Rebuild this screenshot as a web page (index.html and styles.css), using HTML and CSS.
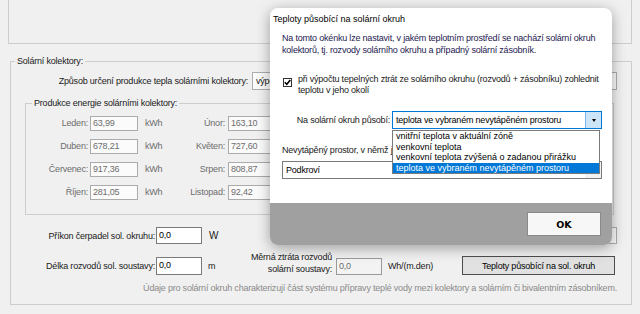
FILE: index.html
```html
<!DOCTYPE html>
<html lang="cs">
<head>
    <meta charset="UTF-8">
    <title>Solární kolektory</title>
    <link rel="stylesheet" href="styles.css">
</head>
<body>
    <div class="top-pane"></div>

    <fieldset class="group">
        <legend>Solární kolektory:</legend>

        <div class="row method">
            <span class="lbl">Způsob určení produkce tepla solárními kolektory:</span>
            <div class="combo plain">výpočet z plochy a orientace kolektorů</div>
        </div>

        <fieldset class="group inner">
            <legend>Produkce energie solárními kolektory:</legend>
            <div class="months">
                <span class="m-lbl">Leden:</span><span class="field">63,99</span><span class="unit">kWh</span>
                <span class="m-lbl two">Únor:</span><span class="field">163,10</span>
                <span class="m-lbl">Duben:</span><span class="field">678,21</span><span class="unit">kWh</span>
                <span class="m-lbl two">Květen:</span><span class="field">727,60</span>
                <span class="m-lbl">Červenec:</span><span class="field">917,36</span><span class="unit">kWh</span>
                <span class="m-lbl two">Srpen:</span><span class="field">808,87</span>
                <span class="m-lbl">Říjen:</span><span class="field">281,05</span><span class="unit">kWh</span>
                <span class="m-lbl two">Listopad:</span><span class="field">92,42</span>
            </div>
        </fieldset>

        <div class="row pump">
            <span class="lbl">Příkon čerpadel sol. okruhu:</span>
            <span class="field dark">0,0</span>
            <span class="unit">W</span>
            <div class="combo plain right"></div>
        </div>

        <div class="row pipes">
            <span class="lbl">Délka rozvodů sol. soustavy:</span>
            <span class="field dark">0,0</span>
            <span class="unit short">m</span>
            <span class="lbl loss">Měrná ztráta rozvodů<br>solární soustavy:</span>
            <span class="field dim">0,0</span>
            <span class="unit wide">Wh/(m.den)</span>
            <button class="btn">Teploty působící na sol. okruh</button>
        </div>

        <p class="footnote">Údaje pro solární okruh charakterizují část systému přípravy teplé vody mezi kolektory a solárním či bivalentním zásobníkem.</p>
    </fieldset>

    <!-- modal dialog over the form -->
    <div class="dialog">
        <div class="dialog-title">Teploty působící na solární okruh</div>
        <div class="dialog-body">
            <p class="note">Na tomto okénku lze nastavit, v jakém teplotním prostředí se nachází solární okruh kolektorů, tj. rozvody solárního okruhu a případný solární zásobník.</p>

            <div class="check-row">
                <span class="checkbox">
                    <svg width="7" height="7" viewBox="0 0 7 7"><path d="M0.8 3.2 L2.8 5.3 L6.3 1" fill="none" stroke="#000" stroke-width="1.6"/></svg>
                </span>
                <span>při výpočtu tepelných ztrát ze solárního okruhu (rozvodů + zásobníku) zohlednit teplotu v jeho okolí</span>
            </div>

            <div class="combo-row">
                <span class="lbl">Na solární okruh působí:</span>
                <div class="combo focus">
                    <span class="combo-text">teplota ve vybraném nevytápěném prostoru</span>
                    <span class="combo-btn"><i class="arrow"></i></span>
                </div>
            </div>

            <div class="space-lbl">Nevytápěný prostor, v němž je umístěn solární okruh:</div>
            <div class="combo space">
                <span class="combo-text">Podkroví</span>
                <span class="combo-btn grey"><i class="arrow"></i></span>
            </div>
        </div>
        <div class="dialog-foot">
            <button class="ok">OK</button>
        </div>

        <ul class="droplist">
            <li>vnitřní teplota v aktuální zóně</li>
            <li>venkovní teplota</li>
            <li>venkovní teplota zvýšená o zadanou přirážku</li>
            <li class="sel">teplota ve vybraném nevytápěném prostoru</li>
        </ul>
    </div>
</body>
</html>
```

FILE: styles.css
```css
:root {
    --bg: #f0f0f0;
    --line: #cdcdcd;
    --text: #1a1a1a;
    --muted: #6d6d6d;
    --hint: #8a8a8a;
    --blue: #0078d7;
}

body {
    margin: 0;
    width: 640px;
    height: 314px;
    overflow: hidden;
    position: relative;
    background: var(--bg);
    color: var(--text);
    font-family: "Liberation Sans", Arial, sans-serif;
    font-size: 9px;
    letter-spacing: -0.2px;
}

.top-pane {
    margin-left: 8px;
    width: 622px;
    height: 43px;
    border: 1px solid var(--line);
    border-top: none;
}

.group {
    box-sizing: border-box;
    margin: 11px 0 0 10px;
    width: 622px;
    padding: 0 0 10px 0;
    border: 1px solid var(--line);
    min-width: 0;
}

.group legend {
    margin-left: 4px;
    padding: 0 2px;
    line-height: 12px;
}

.row {
    display: flex;
    align-items: center;
}

.row .lbl {
    width: 144px;
    text-align: right;
    flex-shrink: 0;
}

.method {
    margin-top: 5px;
}

.method .lbl {
    width: 237px;
}

.combo {
    box-sizing: border-box;
    height: 18px;
    display: flex;
    background: #fff;
    border: 1px solid #7a7a7a;
}

.combo.plain {
    margin-left: 4px;
    width: 365px;
    padding-left: 3px;
    line-height: 16px;
    border-color: #adadad;
    background: #fbfbfb;
}

.combo.plain.right {
    width: 155px;
    height: 17px;
    margin-left: auto;
    margin-right: 14px;
}

/* month grid */
.group.inner {
    margin: 7px 0 0 14px;
    width: 589px;
    padding: 7px 0 14px 0;
}

.group.inner legend {
    margin-left: 6px;
}

.months {
    display: grid;
    grid-template-columns: 64px 48px 37px 53px 48px;
    grid-auto-rows: 15px;
    row-gap: 8px;
    color: var(--muted);
}

.m-lbl {
    text-align: right;
    padding-right: 2px;
    line-height: 15px;
}

.m-lbl.two {
    padding-right: 3px;
}

.months .unit {
    padding-left: 7px;
    line-height: 15px;
}

.field {
    box-sizing: border-box;
    height: 15px;
    padding-left: 2px;
    line-height: 13px;
    border: 1px solid #ababab;
    background: #fbfbfb;
    color: var(--muted);
}

.field.dark,
.field.dim {
    width: 46px;
    height: 17px;
    margin-left: 1px;
    line-height: 15px;
    background: #fff;
    border-color: #7a7a7a;
    color: #000;
}

.field.dim {
    margin-left: 4px;
    background: #f3f3f3;
    border-color: #9a9a9a;
    color: var(--muted);
}

.pump {
    margin-top: 12px;
}

.pump .unit {
    padding-left: 7px;
    font-size: 10px;
}

.pipes {
    margin-top: 7px;
    align-items: flex-end;
}

.pipes > .lbl,
.pipes .unit {
    line-height: 18px;
}

.pipes .field.dark {
    height: 18px;
}

.unit.short {
    width: 28px;
    padding-left: 6px;
    box-sizing: border-box;
}

.pipes .lbl.loss {
    width: 102px;
    line-height: 12px;
}

.unit.wide {
    width: 80px;
    padding-left: 6px;
    box-sizing: border-box;
}

.btn {
    box-sizing: border-box;
    width: 153px;
    height: 19px;
    margin: 0;
    padding: 0;
    font: inherit;
    letter-spacing: inherit;
    color: #000;
    background: #e1e1e1;
    border: 1px solid #4d4d4d;
}

.footnote {
    margin: 7px 0 0;
    padding-right: 14px;
    text-align: right;
    line-height: 12px;
    color: var(--hint);
}

/* dialog */
.dialog {
    position: absolute;
    left: 270px;
    top: 8px;
    width: 342px;
    height: 237px;
    display: flex;
    flex-direction: column;
    background: #fff;
    border-radius: 8px;
    overflow: hidden;
    box-shadow: 0 3px 14px rgba(0, 0, 0, 0.35);
}

.dialog-title {
    height: 22px;
    line-height: 22px;
    padding-left: 3px;
    letter-spacing: 0;
    color: #000;
}

.dialog-body {
    flex: 1;
    padding: 2px 4px 0 12px;
}

.note {
    margin: 0;
    line-height: 12px;
    color: #1e2050;
}

.check-row {
    display: flex;
    margin-top: 18px;
    line-height: 11px;
}

.checkbox {
    box-sizing: border-box;
    flex-shrink: 0;
    width: 9px;
    height: 9px;
    margin: 4px 6px 0 1px;
    border: 1px solid #333;
    background: #fff;
    display: flex;
    align-items: center;
    justify-content: center;
}

.combo-row {
    display: flex;
    align-items: center;
    margin-top: 15px;
}

.combo-row .lbl {
    width: 108px;
    text-align: right;
}

.combo.focus {
    margin-left: 2px;
    width: 210px;
    border-color: var(--blue);
}

.combo-text {
    flex: 1;
    padding-left: 3px;
    line-height: 16px;
    color: #000;
}

.combo-btn {
    width: 15px;
    display: flex;
    align-items: center;
    justify-content: center;
    background: #cce4f7;
    border-left: 1px solid #7eb4ea;
}

.combo-btn.grey {
    background: #f3f3f3;
    border-left-color: #f3f3f3;
}

.arrow {
    width: 0;
    height: 0;
    border-left: 2.5px solid transparent;
    border-right: 2.5px solid transparent;
    border-top: 3px solid #000;
}

.space-lbl {
    margin-top: 15px;
    line-height: 12px;
}

.combo.space {
    margin-top: 5px;
    width: 320px;
}

.dialog-foot {
    height: 42px;
    display: flex;
    align-items: center;
    justify-content: flex-end;
    padding-right: 11px;
    background: #a0a0a0;
}

.ok {
    width: 74px;
    height: 24px;
    margin: 0;
    padding: 0;
    font-family: "DejaVu Sans", sans-serif;
    font-size: 9.5px;
    font-weight: bold;
    color: #000;
    background: #f7f7f7;
    border: 1px solid #8a8a8a;
}

.droplist {
    position: absolute;
    left: 122px;
    top: 122px;
    width: 208px;
    margin: 0;
    padding: 0;
    list-style: none;
    box-sizing: border-box;
    background: #fff;
    border: 1px solid #7a7a7a;
    letter-spacing: 0;
}

.droplist li {
    height: 10.5px;
    line-height: 10.5px;
    padding-left: 3px;
    color: #000;
    white-space: nowrap;
}

.droplist li.sel {
    background: var(--blue);
    color: #fff;
}
```
